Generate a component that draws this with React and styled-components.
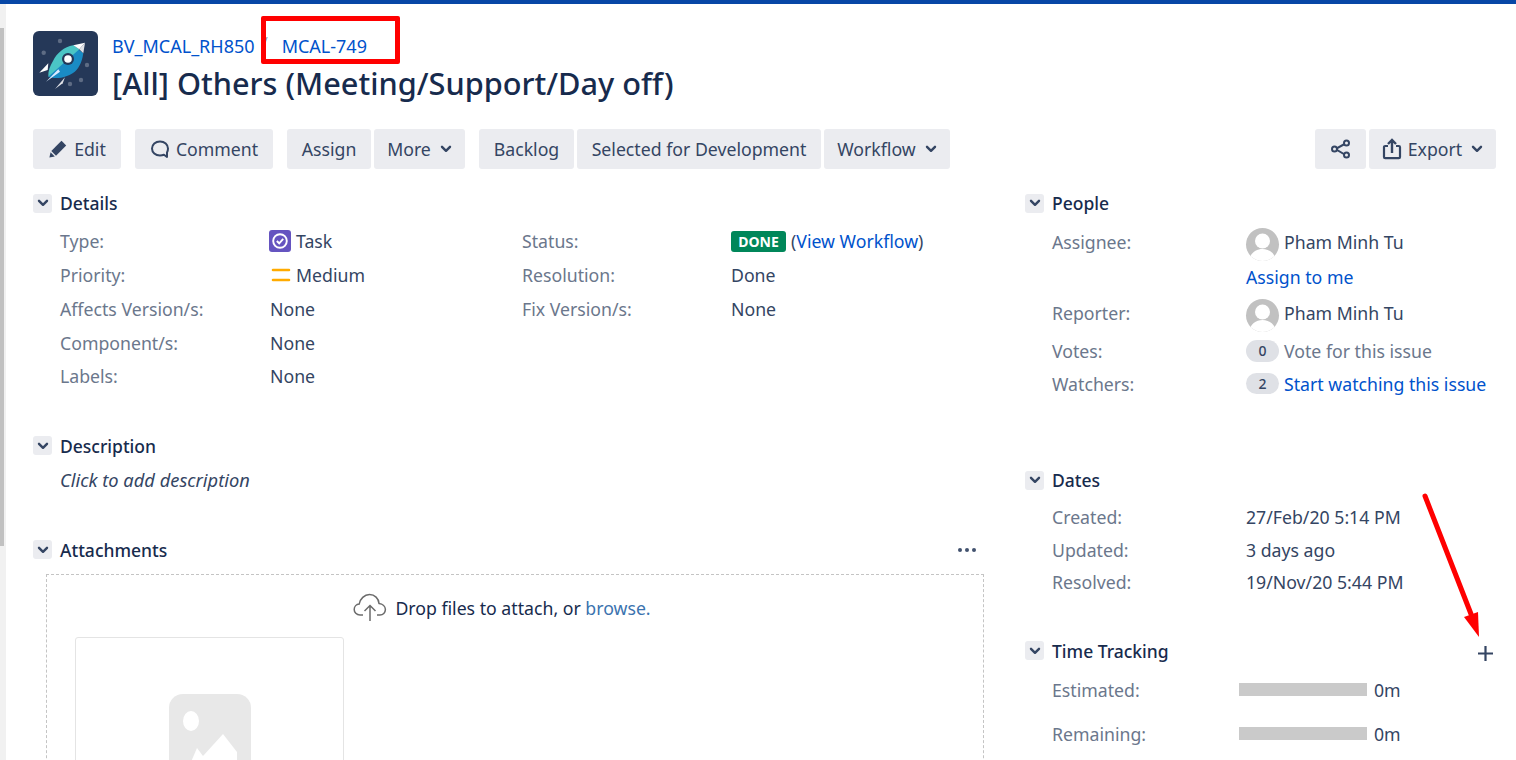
import styled, { createGlobalStyle } from 'styled-components'

const GlobalStyle = createGlobalStyle`
  html, body { margin: 0; padding: 0; background: #fff; overflow: hidden; }
  * { box-sizing: border-box; }
`

const Page = styled.div`
  position: relative;
  width: 1516px;
  height: 760px;
  overflow: hidden;
  font-family: "Noto Sans", "Open Sans", sans-serif;
  font-size: 17.7px;
  color: #344563;
  border-top: 4px solid #0747a6;
  display: flex;
`

const Rail = styled.div`
  width: 6px;
  flex: none;
  background: #f1f1f1;
  padding-top: 24px;
`

const RailThumb = styled.div`
  height: 518px;
  width: 4px;
  background: #c1c1c1;
`

const Main = styled.main`
  flex: 1;
  padding: 27px 20px 0 27px;
`

const Header = styled.header`
  display: flex;
  gap: 14px;
  height: 65px;
`

const HeaderText = styled.div`
  display: flex;
  flex-direction: column;
`

const Crumbs = styled.div`
  height: 30px;
  flex: none;
  display: flex;
  align-items: center;
  font-size: 18px;
`

const Link = styled.a`
  color: ${p => p.$muted ? '#3b73af' : '#0052cc'};
  text-decoration: none;
`

const CrumbSep = styled.span`
  color: #7a869a;
  font-size: 11px;
  margin: 0 14px 0 9px;
  position: relative;
  top: -6px;
`

const Title = styled.h1`
  margin: 0;
  flex: none;
  font-size: 30.7px;
  font-weight: 500;
  line-height: 44px;
  color: #172b4d;
  white-space: nowrap;
`

const Toolbar = styled.div`
  display: flex;
  justify-content: space-between;
  margin-top: 33px;
`

const ToolGroups = styled.div`
  display: flex;
  gap: 14px;
`

const ToolGroup = styled.div`
  display: flex;
  gap: 3px;
`

const ToolButton = styled.div`
  width: ${p => p.$w}px;
  height: 40px;
  background: #ebecf0;
  border-radius: 3px;
  display: flex;
  align-items: center;
  justify-content: center;
  gap: 6px;
  color: #344563;
  white-space: nowrap;
`

const Caret = styled.span`
  display: flex;
  margin-left: 3px;
`

const Columns = styled.div`
  display: grid;
  grid-template-columns: 992px 1fr;
`

const Column = styled.div`
  display: flex;
  flex-direction: column;
`

const Section = styled.section`
  margin-top: ${p => p.$top}px;
`

const SectionHead = styled.div`
  display: flex;
  align-items: center;
  height: 20px;
  gap: 8px;
`

const Toggle = styled.div`
  width: 19px;
  height: 19px;
  border-radius: 3px;
  background: #ebecf0;
  display: flex;
  align-items: center;
  justify-content: center;
  flex: none;
`

const SectionTitle = styled.h2`
  margin: 0;
  font-size: 17.5px;
  font-weight: 500;
  color: #172b4d;
  flex: 1;
`

const FieldGroups = styled.div`
  display: grid;
  grid-template-columns: 462px 1fr;
  margin-top: 11.5px;
`

const FieldRow = styled.div`
  display: flex;
  align-items: center;
  height: ${p => p.$h || 33.75}px;
  margin-top: ${p => p.$mt || 0}px;
  padding-left: 27px;
  white-space: nowrap;
`

const Label = styled.div`
  color: #6b778c;
  width: ${p => p.$w}px;
  flex: none;
`

const Value = styled.div`
  display: flex;
  align-items: center;
  gap: ${p => p.$gap ?? 5}px;
`

const DoneBadge = styled.span`
  background: #00875a;
  color: #fff;
  font-size: 14px;
  font-weight: 700;
  height: 21px;
  width: 55px;
  border-radius: 3px;
  display: inline-flex;
  align-items: center;
  justify-content: center;
`

const Hint = styled.div`
  font-style: italic;
  font-size: 18.3px;
  padding-left: 27px;
  margin-top: 12px;
  height: 24px;
  line-height: 24px;
`

const DropZone = styled.div`
  margin: 14px 41px 0 13px;
  height: 300px;
  border: 1px dashed #c4c4c4;
  padding: 19px 28px;
`

const DropText = styled.div`
  display: flex;
  align-items: center;
  justify-content: center;
  gap: 8px;
  height: 28px;
  padding-right: 26px;
  color: #172b4d;
`

const Thumb = styled.div`
  margin-top: 15px;
  width: 269px;
  height: 220px;
  border: 1px solid #e4e4e4;
  border-radius: 3px;
  display: flex;
  justify-content: center;
  padding-top: 56px;
`

const Avatar = styled.div`
  width: 33px;
  height: 33px;
  margin-top: 5px;
  border-radius: 50%;
  background: #c1c1c1;
  overflow: hidden;
  flex: none;
`

const CountPill = styled.span`
  width: 33px;
  height: ${p => p.$h || 22}px;
  border-radius: 11px;
  background: #dfe1e6;
  color: #344563;
  font-size: 14px;
  font-weight: 500;
  display: inline-flex;
  align-items: center;
  justify-content: center;
`

const Muted = styled.span`
  color: #6b778c;
`

const Bar = styled.div`
  width: 128px;
  height: 13px;
  background: #cacaca;
`

const HeadAction = styled.span`
  display: flex;
  margin: ${p => p.$margin};
`

const TaskSvg = styled.svg`
  margin-left: -1px;
`

const MediumSvg = styled.svg`
  margin-right: -1px;
`

const Annotation = styled.div`
  position: absolute;
  left: 261px;
  top: 12px;
  width: 139px;
  height: 48px;
  border: 5px solid #ff0000;
  border-radius: 2px;
`

const ArrowLayer = styled.svg`
  position: absolute;
  left: 1400px;
  top: 480px;
`

const Chevron = ({ size = 12, color = '#344563' }) => (
  <svg width={size} height={size} viewBox="0 0 12 12">
    <path d="M2 3.8 6 7.8 10 3.8" fill="none" stroke={color} strokeWidth="2.4" strokeLinecap="round" strokeLinejoin="round" />
  </svg>
)

const RocketLogo = () => (
  <svg width="65" height="65" viewBox="0 0 65 65">
    <rect width="65" height="65" rx="6" fill="#253858" />
    <g fill="#5e6c84">
      <circle cx="27" cy="10" r="2.2" />
      <circle cx="10.7" cy="21.7" r="2.2" />
      <circle cx="54" cy="34" r="2.2" />
      <circle cx="48" cy="49" r="2.2" />
      <circle cx="37" cy="53" r="2.2" />
    </g>
    <path d="M6.3 41.7 15.3 32.3 14.7 39 Z" fill="#fff" />
    <path d="M22 58 32 46.3 29.7 52.3 Z" fill="#dfe1e6" />
    <path d="M40.3 14.3 50.3 22.3C49 32 45 39 40 42 34 46 24 49 15.3 45.7Z" fill="#1a8bc4" />
    <path d="M40.3 14.3C31 16 24 22 20 30 17 35 15 40 15.3 45.7L46.3 18.3Z" fill="#4bc5c5" />
    <path d="M40.3 14.3 52 11.7 46.3 18.3Z" fill="#fff" />
    <path d="M52 11.7 50.3 22.3 46.3 18.3Z" fill="#dfe1e6" />
    <path d="M13 50.7 25.3 38.3 27 40.7Z" fill="#deebff" />
    <circle cx="35" cy="28" r="6" fill="#253858" />
    <circle cx="35" cy="28" r="3.8" fill="#fff" />
  </svg>
)

const PencilIcon = () => (
  <svg width="20" height="20" viewBox="0 0 20 20">
    <path d="M13.5 1.8 18.2 6.5 8 16.7 3.3 12Z" fill="#344563" />
    <path d="M2.6 13.2 6.8 17.4 1.4 18.6Z" fill="#344563" />
  </svg>
)

const CommentIcon = () => (
  <svg width="20" height="20" viewBox="0 0 20 20">
    <path d="M10 2.4C5.4 2.4 2 5.6 2 9.5S5.4 16.6 10 16.6C11.4 16.6 13 16.2 14 15.7L17 18V13.4C17.7 12.2 18 10.9 18 9.5 18 5.6 14.6 2.4 10 2.4Z" fill="none" stroke="#344563" strokeWidth="2" strokeLinejoin="round" />
  </svg>
)

const ShareIcon = () => (
  <svg width="22" height="22" viewBox="0 0 22 22">
    <path d="M15.5 5.5 5.5 11 15.5 17" fill="none" stroke="#344563" strokeWidth="2" />
    <g fill="#ebecf0" stroke="#344563" strokeWidth="2">
      <circle cx="16.5" cy="5" r="2.5" />
      <circle cx="4.5" cy="11" r="2.5" />
      <circle cx="16.5" cy="17" r="2.5" />
    </g>
  </svg>
)

const ExportIcon = () => (
  <svg width="20" height="22" viewBox="0 0 20 22">
    <path d="M6 8H3.2C2.5 8 2 8.5 2 9.2V19C2 19.7 2.5 20.2 3.2 20.2H16.8C17.5 20.2 18 19.7 18 19V9.2C18 8.5 17.5 8 16.8 8H14" fill="none" stroke="#344563" strokeWidth="2.2" />
    <path d="M10 15V2.5M6 6 10 2 14 6" fill="none" stroke="#344563" strokeWidth="2.4" />
  </svg>
)

const TaskIcon = () => (
  <TaskSvg width="22" height="22" viewBox="0 0 22 22">
    <rect width="22" height="22" rx="3" fill="#6554c0" />
    <circle cx="11" cy="11" r="6.8" fill="none" stroke="#fff" strokeWidth="1.9" />
    <path d="M7.8 11 10.2 13.3 14.2 8.8" fill="none" stroke="#fff" strokeWidth="1.9" />
  </TaskSvg>
)

const MediumIcon = () => (
  <MediumSvg width="22" height="22" viewBox="0 0 22 22">
    <path d="M3 6H19M3 16H19" stroke="#ffab00" strokeWidth="2.6" strokeLinecap="round" />
  </MediumSvg>
)

const PersonIcon = () => (
  <svg width="33" height="33" viewBox="0 0 33 33">
    <circle cx="16.5" cy="13" r="7.5" fill="#fff" />
    <path d="M3 33C4 25 10 21 16.5 21S29 25 30 33Z" fill="#fff" />
  </svg>
)

const CloudIcon = () => (
  <svg width="34" height="30" viewBox="0 0 34 30">
    <path d="M10 22H7C3.5 22 1.2 19.4 1.2 16.4 1.2 13.4 3.4 11.2 6.2 11 7 6 11.4 1.5 16.5 1.5 21.8 1.5 25.6 5.6 26 10.4 29.6 10.8 32.4 13.4 32.4 16.6 32.4 19.6 30 22 27 22H24" fill="none" stroke="#6b6b6b" strokeWidth="1.5" />
    <path d="M17 28V13M11.5 18 17 12.5 22.5 18" fill="none" stroke="#6b6b6b" strokeWidth="1.5" />
  </svg>
)

const ImagePlaceholder = () => (
  <svg width="82" height="82" viewBox="0 0 82 82">
    <rect width="82" height="120" rx="14" fill="#e8e8e8" />
    <ellipse cx="22" cy="27" rx="8" ry="10" fill="#fff" />
    <path d="M16 82 28 54 34 62 54 40 68 58V82Z" fill="#fff" />
  </svg>
)

const DotsIcon = () => (
  <svg width="20" height="6" viewBox="0 0 20 6">
    <circle cx="3" cy="3" r="2" fill="#42526e" />
    <circle cx="10" cy="3" r="2" fill="#42526e" />
    <circle cx="17" cy="3" r="2" fill="#42526e" />
  </svg>
)

const PlusIcon = () => (
  <svg width="17" height="17" viewBox="0 0 17 17">
    <path d="M8.5 1V16M1 8.5H16" stroke="#344563" strokeWidth="2.2" />
  </svg>
)

const detailsLeft = [
  ['Type:', <><TaskIcon />Task</>],
  ['Priority:', <><MediumIcon />Medium</>],
  ['Affects Version/s:', 'None'],
  ['Component/s:', 'None'],
  ['Labels:', 'None'],
]

const detailsRight = [
  ['Status:', <><DoneBadge>DONE</DoneBadge><span>(<Link href="#">View Workflow</Link>)</span></>],
  ['Resolution:', 'Done'],
  ['Fix Version/s:', 'None'],
]

const Panel = ({ title, top, action, children }) => (
  <Section $top={top}>
    <SectionHead>
      <Toggle><Chevron /></Toggle>
      <SectionTitle>{title}</SectionTitle>
      {action}
    </SectionHead>
    {children}
  </Section>
)

export default function App() {
  return (
    <Page>
      <GlobalStyle />
      <Rail><RailThumb /></Rail>
      <Main>
        <Header>
          <RocketLogo />
          <HeaderText>
            <Crumbs>
              <Link href="#">BV_MCAL_RH850</Link>
              <CrumbSep>/</CrumbSep>
              <Link href="#">MCAL-749</Link>
            </Crumbs>
            <Title>[All] Others (Meeting/Support/Day off)</Title>
          </HeaderText>
        </Header>

        <Toolbar>
          <ToolGroups>
            <ToolButton $w={88}><PencilIcon />Edit</ToolButton>
            <ToolButton $w={138}><CommentIcon />Comment</ToolButton>
            <ToolGroup>
              <ToolButton $w={84}>Assign</ToolButton>
              <ToolButton $w={91}>More<Caret><Chevron /></Caret></ToolButton>
            </ToolGroup>
            <ToolGroup>
              <ToolButton $w={95}>Backlog</ToolButton>
              <ToolButton $w={244}>Selected for Development</ToolButton>
              <ToolButton $w={126}>Workflow<Caret><Chevron /></Caret></ToolButton>
            </ToolGroup>
          </ToolGroups>
          <ToolGroup>
            <ToolButton $w={51}><ShareIcon /></ToolButton>
            <ToolButton $w={127}><ExportIcon />Export<Caret><Chevron /></Caret></ToolButton>
          </ToolGroup>
        </Toolbar>

        <Columns>
          <Column>
            <Panel title="Details" top={24}>
              <FieldGroups>
                <div>
                  {detailsLeft.map(([label, value]) => (
                    <FieldRow key={label}>
                      <Label $w={210}>{label}</Label>
                      <Value>{value}</Value>
                    </FieldRow>
                  ))}
                </div>
                <div>
                  {detailsRight.map(([label, value]) => (
                    <FieldRow key={label}>
                      <Label $w={209}>{label}</Label>
                      <Value>{value}</Value>
                    </FieldRow>
                  ))}
                </div>
              </FieldGroups>
            </Panel>

            <Panel title="Description" top={42.5}>
              <Hint>Click to add description</Hint>
            </Panel>

            <Panel title="Attachments" top={48} action={<HeadAction $margin="0 48px 0 0"><DotsIcon /></HeadAction>}>
              <DropZone>
                <DropText>
                  <CloudIcon />
                  <span>Drop files to attach, or <Link $muted href="#">browse.</Link></span>
                </DropText>
                <Thumb><ImagePlaceholder /></Thumb>
              </DropZone>
            </Panel>
          </Column>

          <Column>
            <Panel title="People" top={24}>
              <FieldRow $h={39} $mt={9}>
                <Label $w={194}>Assignee:</Label>
                <Value><Avatar><PersonIcon /></Avatar>Pham Minh Tu</Value>
              </FieldRow>
              <FieldRow $h={32}>
                <Label $w={194} />
                <Link href="#">Assign to me</Link>
              </FieldRow>
              <FieldRow $h={40}>
                <Label $w={194}>Reporter:</Label>
                <Value><Avatar><PersonIcon /></Avatar>Pham Minh Tu</Value>
              </FieldRow>
              <FieldRow $h={35}>
                <Label $w={194}>Votes:</Label>
                <Value><CountPill>0</CountPill><Muted>Vote for this issue</Muted></Value>
              </FieldRow>
              <FieldRow $h={31}>
                <Label $w={194}>Watchers:</Label>
                <Value><CountPill $h={21}>2</CountPill><Link href="#">Start watching this issue</Link></Value>
              </FieldRow>
            </Panel>

            <Panel title="Dates" top={71}>
              <FieldRow $h={32.5} $mt={11}>
                <Label $w={194}>Created:</Label>27/Feb/20 5:14 PM
              </FieldRow>
              <FieldRow $h={32.5}>
                <Label $w={194}>Updated:</Label>3 days ago
              </FieldRow>
              <FieldRow $h={32.5}>
                <Label $w={194}>Resolved:</Label>19/Nov/20 5:44 PM
              </FieldRow>
            </Panel>

            <Panel title="Time Tracking" top={42} action={<HeadAction $margin="5px 2px 0 0"><PlusIcon /></HeadAction>}>
              <FieldRow $h={44} $mt={7}>
                <Label $w={187}>Estimated:</Label>
                <Value $gap={7}><Bar />0m</Value>
              </FieldRow>
              <FieldRow $h={44}>
                <Label $w={187}>Remaining:</Label>
                <Value $gap={7}><Bar />0m</Value>
              </FieldRow>
            </Panel>
          </Column>
        </Columns>
      </Main>

      <Annotation />
      <ArrowLayer width="90" height="160" viewBox="0 0 90 160">
        <path d="M25 12 71 130" stroke="#ff0000" strokeWidth="5" strokeLinecap="round" />
        <path d="M64 133 78 128 79 153Z" fill="#ff0000" />
      </ArrowLayer>
    </Page>
  )
}
